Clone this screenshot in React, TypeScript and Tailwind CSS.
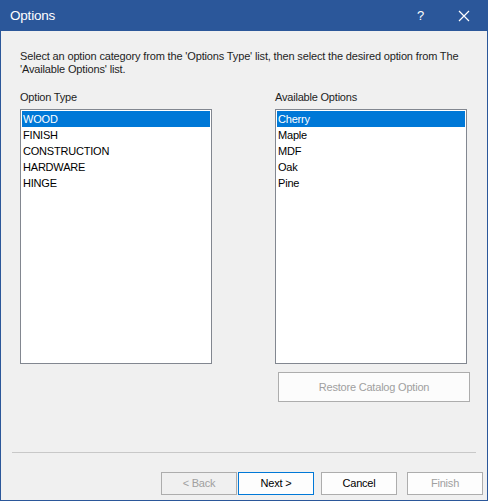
import { useState } from "react";

const types = ["WOOD", "FINISH", "CONSTRUCTION", "HARDWARE", "HINGE"];
const options = ["Cherry", "Maple", "MDF", "Oak", "Pine"];

function ListBox({ items, selected, onSelect }: { items: string[]; selected: number; onSelect: (i: number) => void }) {
  return (
    <div className="w-[192px] h-[255px] border border-[#828790] bg-white p-px">
      {items.map((item, i) => (
        <div
          key={item}
          onClick={() => onSelect(i)}
          className={`h-4 leading-4 pl-px text-[11px] tracking-[-0.2px] cursor-default ${
            i === selected ? "bg-[#0078d7] text-white" : "text-black"
          }`}
        >
          {item}
        </div>
      ))}
    </div>
  );
}

export default function App() {
  const [typeIdx, setTypeIdx] = useState(0);
  const [optIdx, setOptIdx] = useState(0);

  return (
    <div
      className="w-[488px] h-[501px] border border-[#2b579a] bg-[#f0f0f0] flex flex-col text-black"
      style={{ fontFamily: '"Liberation Sans", Arial, sans-serif' }}
    >
      {/* title bar */}
      <div className="h-[30px] bg-[#2b579a] flex items-center text-white shrink-0">
        <span className="ml-[9px] text-[13.5px] tracking-[-0.2px] flex-1">Options</span>
        <span className="text-[13px] w-[10px] mr-[31px]">?</span>
        <svg width="12" height="12" viewBox="0 0 12 12" className="mr-[17px]">
          <path d="M1 1 L11 11 M11 1 L1 11" stroke="white" strokeWidth="1.2" />
        </svg>
      </div>

      {/* body */}
      <div className="flex flex-col px-[19px]">
        <p className="mt-[19px] text-[11px] tracking-[-0.15px] leading-[13px] whitespace-nowrap text-[#1e1e1e]">
          Select an option category from the 'Options Type' list, then select the desired option from The
          <br />
          'Available Options' list.
        </p>

        <div className="flex mt-[15px] gap-[63px]">
          <div className="flex flex-col">
            <span className="text-[11px] tracking-[-0.2px] leading-[13px] mb-[5px] text-[#1e1e1e]">Option Type</span>
            <ListBox items={types} selected={typeIdx} onSelect={setTypeIdx} />
          </div>
          <div className="flex flex-col">
            <span className="text-[11px] tracking-[-0.2px] leading-[13px] mb-[5px] text-[#1e1e1e]">Available Options</span>
            <ListBox items={options} selected={optIdx} onSelect={setOptIdx} />
            <button
              disabled
              className="mt-[8px] ml-[3px] w-[192px] h-[30px] border border-[#adadad] bg-[#fcfcfc] text-[11px] tracking-[-0.2px] text-[#a0a0a0]"
            >
              Restore Catalog Option
            </button>
          </div>
        </div>
      </div>

      {/* separator */}
      <div className="mt-auto mx-[11px] border-t border-[#c8c8c8] mb-[19px]" />

      {/* buttons */}
      <div className="flex items-center pl-[160px] mb-[5px] text-[11px] tracking-[-0.2px]">
        <button disabled className="w-[76px] h-[23px] border border-[#adadad] bg-[#f0f0f0] text-[#a0a0a0]">
          &lt; Back
        </button>
        <button className="ml-[1px] w-[76px] h-[23px] border border-[#0078d7] bg-[#fdfdfd] text-black">
          Next &gt;
        </button>
        <button className="ml-[7px] w-[76px] h-[23px] border border-[#adadad] bg-[#fdfdfd] text-black">
          Cancel
        </button>
        <button disabled className="ml-[10px] w-[76px] h-[23px] border border-[#adadad] bg-[#fdfdfd] text-[#a0a0a0]">
          Finish
        </button>
      </div>
    </div>
  );
}
